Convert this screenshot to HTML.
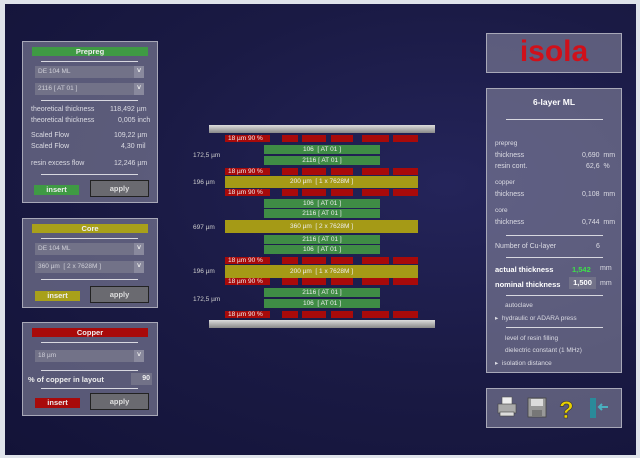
<!DOCTYPE html>
<html><head><meta charset="utf-8"><style>
*{margin:0;padding:0;box-sizing:border-box}
body{width:640px;height:458px;overflow:hidden;background:#dfe3ea;font-family:"Liberation Sans",sans-serif;font-size:7px;color:#dcdce4;position:relative}
#bg{position:absolute;left:5px;top:4px;width:631px;height:451px;background:radial-gradient(ellipse at 70% 40%,#24245a 0%,#1a1a44 50%,#131338 100%)}
.a{position:absolute}
.pan{position:absolute;background:rgba(145,145,168,0.55);border:1px solid #a8a8b8}
.hr{position:absolute;height:1px;background:#d8d8e0}
.sel{position:absolute;height:12px;background:rgba(120,120,140,0.8);color:#cfcfd8;font-size:6.5px;line-height:12px;padding-left:3px}
.sel b{position:absolute;right:0;top:0;width:10px;height:12px;background:rgba(140,140,160,0.9);text-align:center;font-size:7px;color:#eee}
.btn{position:absolute;border:1px solid #222;background:#6a6a70;color:#ddd;font-weight:bold;font-size:7.5px;text-align:center;line-height:15px}
.ins{position:absolute;color:#eee;font-weight:bold;font-size:7.5px;text-align:center;line-height:10px}
.r{position:absolute;background:#a80a0a;height:7px}
.g{position:absolute;background:#3f8c45;color:#eee;font-size:6.5px;text-align:center;line-height:9px;left:264px;width:116px;height:9px}
.y{position:absolute;background:#a59a16;color:#eee;font-size:6.5px;text-align:center;left:225px;width:193px}
.rl{position:absolute;left:225px;width:45px;height:7px;background:#a80a0a;color:#eee;font-size:6.5px;line-height:7px;padding-left:3px}
.lbl{position:absolute;left:193px;font-size:6.5px;color:#ccc}
.t{position:absolute;font-size:7px;color:#dcdce4}
</style></head><body>
<div id="bg"></div>

<div class="pan" style="left:22px;top:41px;width:136px;height:162px"></div>
<div class="a" style="left:32px;top:47px;width:116px;height:9px;background:#3f9a44;color:#eee;font-weight:bold;font-size:7.5px;text-align:center;line-height:9px">Prepreg</div>
<div class="hr" style="left:41px;top:61px;width:97px"></div>
<div class="sel" style="left:35px;top:66px;width:109px">DE 104 ML<b>˅</b></div>
<div class="sel" style="left:35px;top:83px;width:109px">2116 [ AT 01 ]<b>˅</b></div>
<div class="hr" style="left:41px;top:100px;width:97px"></div>
<div class="t" style="left:31px;top:106px">theoretical thickness</div><div class="t" style="left:110px;top:106px">118,492 µm</div>
<div class="t" style="left:31px;top:117px">theoretical thickness</div><div class="t" style="left:118px;top:117px">0,005 inch</div>
<div class="t" style="left:31px;top:132px">Scaled Flow</div><div class="t" style="left:114px;top:132px">109,22 µm</div>
<div class="t" style="left:31px;top:143px">Scaled Flow</div><div class="t" style="left:121px;top:143px">4,30 mil</div>
<div class="t" style="left:31px;top:160px">resin excess flow</div><div class="t" style="left:114px;top:160px">12,246 µm</div>
<div class="hr" style="left:41px;top:174px;width:97px"></div>
<div class="ins" style="left:34px;top:185px;width:45px;background:#3f9a44">insert</div>
<div class="btn" style="left:90px;top:180px;width:59px;height:17px">apply</div>

<div class="pan" style="left:22px;top:218px;width:136px;height:90px"></div>
<div class="a" style="left:32px;top:224px;width:116px;height:9px;background:#a8a01a;color:#eee;font-weight:bold;font-size:7.5px;text-align:center;line-height:9px">Core</div>
<div class="hr" style="left:41px;top:238px;width:97px"></div>
<div class="sel" style="left:35px;top:243px;width:109px">DE 104 ML<b>˅</b></div>
<div class="sel" style="left:35px;top:261px;width:109px">360 µm &nbsp;[ 2 x 7628M ]<b>˅</b></div>
<div class="hr" style="left:41px;top:279px;width:97px"></div>
<div class="ins" style="left:35px;top:291px;width:45px;background:#a8a01a">insert</div>
<div class="btn" style="left:90px;top:286px;width:59px;height:17px">apply</div>

<div class="pan" style="left:22px;top:322px;width:136px;height:94px"></div>
<div class="a" style="left:32px;top:328px;width:116px;height:9px;background:#a80a0a;color:#eee;font-weight:bold;font-size:7.5px;text-align:center;line-height:9px">Copper</div>
<div class="hr" style="left:41px;top:342px;width:97px"></div>
<div class="sel" style="left:35px;top:350px;width:109px">18 µm<b>˅</b></div>
<div class="hr" style="left:41px;top:370px;width:97px"></div>
<div class="a" style="left:28px;top:375px;font-weight:bold;font-size:7.5px;color:#eee">% of copper in layout</div>
<div class="a" style="left:131px;top:373px;width:21px;height:12px;background:rgba(120,120,140,0.8);font-weight:bold;color:#eee;text-align:right;padding-right:2px;line-height:12px">90</div>
<div class="hr" style="left:41px;top:388px;width:97px"></div>
<div class="ins" style="left:35px;top:398px;width:45px;background:#a80a0a">insert</div>
<div class="btn" style="left:90px;top:393px;width:59px;height:17px">apply</div>

<div class="a" style="left:209px;top:125px;width:226px;height:8px;background:linear-gradient(#ddd,#888)"></div>
<div class="a" style="left:209px;top:320px;width:226px;height:8px;background:linear-gradient(#ddd,#888)"></div>

<div id="stack"></div>
<script>
var s='',rows=[135,168,189,257,278,311];
rows.forEach(function(y){
 s+='<div class="rl" style="top:'+y+'px">18 µm 90 %</div>';
 [[282,16],[302,24],[331,22],[362,27],[393,25]].forEach(function(b){s+='<div class="r" style="left:'+b[0]+'px;width:'+b[1]+'px;top:'+y+'px"></div>'});
});
document.getElementById('stack').innerHTML=s;
</script>
<div class="g" style="top:145px">106 &nbsp;[ AT 01 ]</div>
<div class="g" style="top:156px">2116 [ AT 01 ]</div>
<div class="y" style="top:176px;height:12px;line-height:12px">200 µm &nbsp;[ 1 x 7628M ]</div>
<div class="g" style="top:199px">106 &nbsp;[ AT 01 ]</div>
<div class="g" style="top:209px">2116 [ AT 01 ]</div>
<div class="y" style="top:220px;height:13px;line-height:13px">360 µm &nbsp;[ 2 x 7628M ]</div>
<div class="g" style="top:235px">2116 [ AT 01 ]</div>
<div class="g" style="top:245px">106 &nbsp;[ AT 01 ]</div>
<div class="y" style="top:265px;height:13px;line-height:13px">200 µm &nbsp;[ 1 x 7628M ]</div>
<div class="g" style="top:288px">2116 [ AT 01 ]</div>
<div class="g" style="top:299px">106 &nbsp;[ AT 01 ]</div>
<div class="lbl" style="top:152px">172,5 µm</div>
<div class="lbl" style="top:179px">196 µm</div>
<div class="lbl" style="top:224px">697 µm</div>
<div class="lbl" style="top:268px">196 µm</div>
<div class="lbl" style="top:296px">172,5 µm</div>

<div class="pan" style="left:486px;top:33px;width:136px;height:40px"></div>
<div class="a" style="left:486px;top:35px;width:136px;text-align:center;font-size:30px;line-height:34px;font-weight:bold;color:#d0101a">isola</div>
<div class="pan" style="left:486px;top:88px;width:136px;height:285px"></div>
<div class="a" style="left:486px;top:97px;width:136px;text-align:center;font-weight:bold;font-size:8.5px;color:#fff">6-layer ML</div>
<div class="hr" style="left:506px;top:119px;width:97px"></div>
<div class="t" style="left:495px;top:140px;font-size:6.5px">prepreg</div>
<div class="t" style="left:495px;top:152px">thickness</div><div class="t" style="left:582px;top:152px">0,690 &nbsp;mm</div>
<div class="t" style="left:495px;top:163px">resin cont.</div><div class="t" style="left:586px;top:163px">62,6 &nbsp;%</div>
<div class="t" style="left:495px;top:179px;font-size:6.5px">copper</div>
<div class="t" style="left:495px;top:191px">thickness</div><div class="t" style="left:582px;top:191px">0,108 &nbsp;mm</div>
<div class="t" style="left:495px;top:207px;font-size:6.5px">core</div>
<div class="t" style="left:495px;top:219px">thickness</div><div class="t" style="left:582px;top:219px">0,744 &nbsp;mm</div>
<div class="hr" style="left:506px;top:235px;width:97px"></div>
<div class="t" style="left:495px;top:243px">Number of Cu-layer</div><div class="t" style="left:596px;top:243px">6</div>
<div class="hr" style="left:506px;top:257px;width:97px"></div>
<div class="a" style="left:495px;top:265px;font-weight:bold;font-size:7.5px;color:#fff">actual thickness</div>
<div class="a" style="left:572px;top:265px;font-weight:bold;font-size:7.5px;color:#3ee04a">1,542</div><div class="t" style="left:600px;top:265px">mm</div>
<div class="a" style="left:495px;top:280px;font-weight:bold;font-size:7.5px;color:#fff">nominal thickness</div>
<div class="a" style="left:569px;top:277px;width:27px;height:12px;background:rgba(120,120,140,0.8);font-weight:bold;font-size:7.5px;color:#fff;text-align:center;line-height:12px">1,500</div><div class="t" style="left:600px;top:280px">mm</div>
<div class="hr" style="left:506px;top:295px;width:97px"></div>
<div class="t" style="left:505px;top:302px;font-size:6.5px">autoclave</div>
<div class="t" style="left:495px;top:314px;font-size:6.5px">▸ &nbsp;hydraulic or ADARA press</div>
<div class="hr" style="left:506px;top:327px;width:97px"></div>
<div class="t" style="left:505px;top:335px;font-size:6.5px">level of resin filling</div>
<div class="t" style="left:505px;top:347px;font-size:6.5px">dielectric constant (1 MHz)</div>
<div class="t" style="left:495px;top:359px;font-size:6.5px">▸ &nbsp;isolation distance</div>
<div class="pan" style="left:486px;top:388px;width:136px;height:40px"></div>
<svg class="a" style="left:496px;top:395px" width="120" height="26" viewBox="0 0 120 26">
 <rect x="6" y="2" width="10" height="8" fill="#eee" stroke="#555" stroke-width=".6"/>
 <rect x="2" y="9" width="18" height="9" fill="#aaa" stroke="#444" stroke-width=".6"/>
 <rect x="4" y="17" width="14" height="4" fill="#ddd" stroke="#444" stroke-width=".6"/>
 <rect x="32" y="3" width="18" height="19" fill="#999" stroke="#444" stroke-width=".8"/>
 <rect x="35" y="4" width="12" height="7" fill="#ddd"/>
 <rect x="36" y="15" width="10" height="6" fill="#777"/>
 <text x="63" y="23" font-family="Liberation Sans" font-weight="bold" font-size="24" fill="#e8d000" stroke="#333" stroke-width=".6">?</text>
 <rect x="94" y="3" width="6" height="20" fill="#2a8a9a"/>
 <path d="M112 12 H103 M106 9 L103 12 L106 15" stroke="#4ab0c0" stroke-width="2" fill="none"/>
</svg>
</body></html>
